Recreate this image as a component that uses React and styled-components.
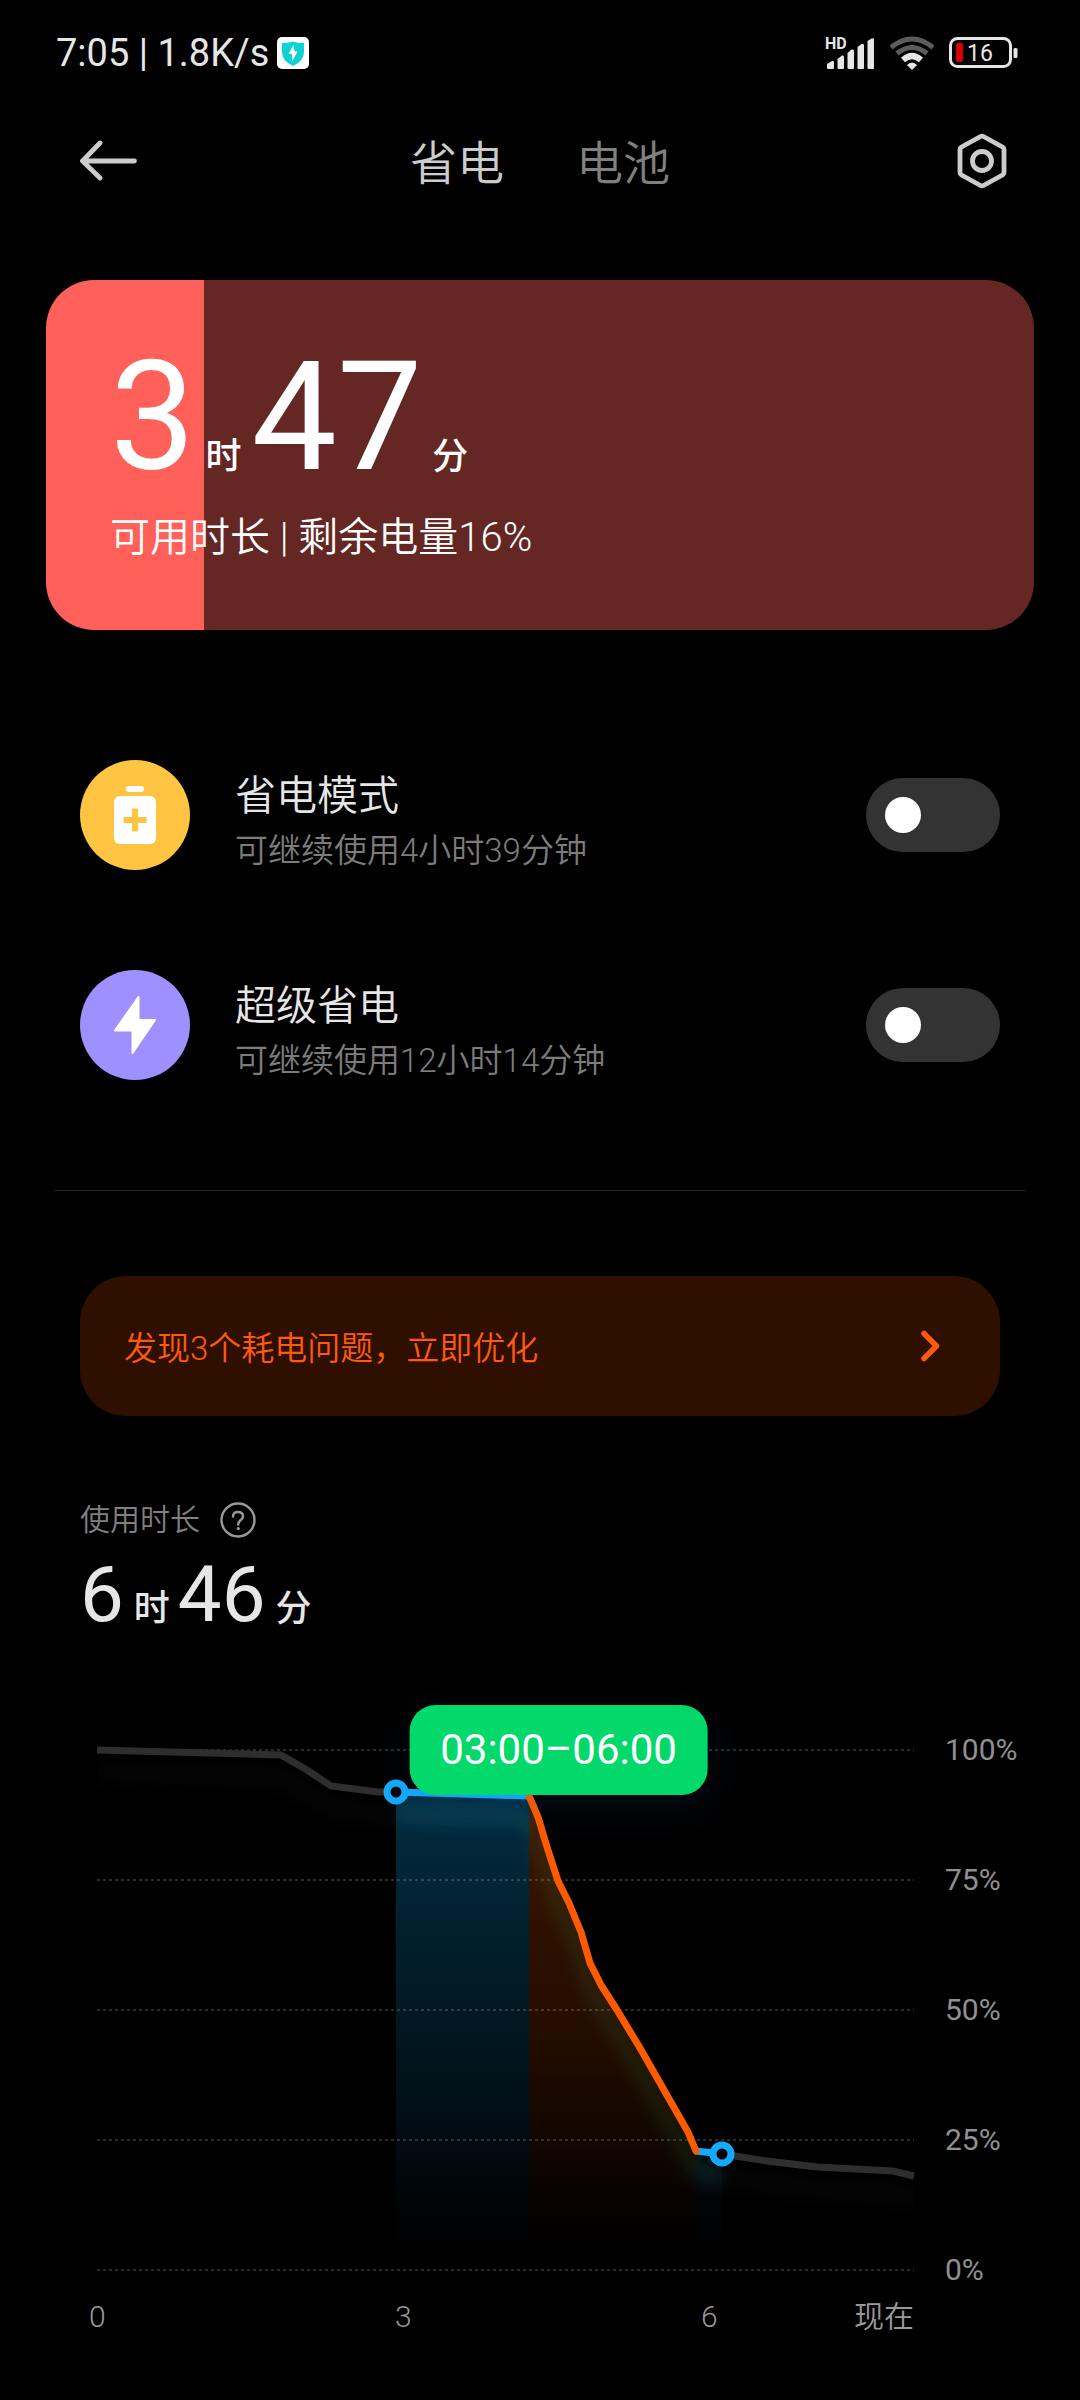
import React, { useState } from "react";
import styled, { createGlobalStyle } from "styled-components";

const GlobalStyle = createGlobalStyle`
    * {
        box-sizing: border-box;
    }

    body {
        margin: 0;
        background: #000;
        color: #e6e6e6;
        font-family: Roboto, "Noto Sans CJK SC", sans-serif;
        font-weight: 350;
    }

    button {
        padding: 0;
        border: none;
        background: none;
        color: inherit;
        font: inherit;
        cursor: pointer;
    }

    svg {
        display: block;
    }
`;

const Page = styled.main`
    min-height: 100vh;
    padding-bottom: 58px;
`;

const StatusBar = styled.div`
    display: flex;
    align-items: center;
    justify-content: space-between;
    height: 106px;
    padding: 0 62px 0 56px;
`;

const StatusGroup = styled.div`
    display: flex;
    align-items: center;
    gap: ${(props) => props.$gap}px;
    font-size: 38px;
    font-weight: 400;
    line-height: 44px;
`;

const TopBar = styled.header`
    display: grid;
    grid-template-columns: 1fr auto 1fr;
    align-items: center;
    height: 110px;
    padding: 0 70px;
`;

const IconButton = styled.button`
    justify-self: ${(props) => props.$side};
`;

const Tabs = styled.nav`
    display: flex;
    gap: 72px;
    padding-top: 6px;
`;

const Tab = styled.button`
    color: ${(props) => (props.$active ? "#cccccc" : "#808080")};
    font-size: 47px;
    line-height: 68px;
`;

const Hero = styled.section`
    margin: 64px 46px 0;
    height: 350px;
    padding: 68px 64px 0;
    border-radius: 48px;
    color: #fff;
    background: linear-gradient(
        to right,
        #ff6059 ${(props) => props.$level}%,
        #652723 ${(props) => props.$level}%
    );
`;

const Duration = styled.div`
    display: flex;
    align-items: baseline;
    font-weight: 400;
    font-size: ${(props) => props.$size}px;
    line-height: ${(props) => props.$line}px;
`;

const Unit = styled.span`
    margin: 0 ${(props) => props.$after || 0}px 0 ${(props) => props.$before}px;
    font-size: 36px;
    font-weight: 500;
    line-height: 52px;
`;

const HeroNote = styled.p`
    margin: 24px 0 0;
    font-size: 40px;
    line-height: 56px;
`;

const ModeList = styled.section`
    display: flex;
    flex-direction: column;
    gap: 100px;
    margin: 130px 80px 0;
`;

const ModeRow = styled.label`
    display: flex;
    align-items: center;
    height: 110px;
    cursor: pointer;
`;

const ModeIcon = styled.span`
    display: grid;
    place-items: center;
    width: 110px;
    height: 110px;
    border-radius: 50%;
    background: ${(props) => props.$color};
`;

const ModeText = styled.span`
    display: flex;
    flex-direction: column;
    flex: 1;
    padding: 12px 0 0 45px;
`;

const ModeTitle = styled.span`
    font-size: 41px;
    line-height: 60px;
`;

const ModeHint = styled.span`
    color: #7c7c7c;
    font-size: 33px;
    line-height: 50px;
`;

const Switch = styled.input`
    appearance: none;
    display: flex;
    align-items: center;
    width: 134px;
    height: 74px;
    margin: 0;
    padding: 0 19px;
    border-radius: 37px;
    background: #333;
    cursor: pointer;

    &::before {
        content: "";
        width: 36px;
        height: 36px;
        border-radius: 50%;
        background: #fff;
    }

    &:checked {
        justify-content: flex-end;
        background: #0d84ff;
    }
`;

const Divider = styled.hr`
    height: 1px;
    margin: 110px 54px 0;
    border: none;
    background: #252525;
`;

const Notice = styled.button`
    && {
        display: flex;
        align-items: center;
        justify-content: space-between;
        width: calc(100% - 160px);
        height: 140px;
        margin: 85px 80px 0;
        padding: 0 58px 0 44px;
        border-radius: 46px;
        background: #2e0f00;
        color: #ff5a0a;
        font-size: 33px;
    }
`;

const Usage = styled.section`
    margin: 80px 80px 0;
`;

const UsageLabel = styled.div`
    display: flex;
    align-items: center;
    gap: 20px;
    color: #808080;
    font-size: 30px;
    line-height: 48px;
`;

const ChartGrid = styled.div`
    display: grid;
    grid-template-columns: 1fr 166px;
    margin: 104px 0 0 97px;
`;

const Plot = styled.div`
    position: relative;

    svg {
        width: 100%;
        overflow: visible;
    }
`;

const Tooltip = styled.div`
    position: absolute;
    left: 56.5%;
    top: 0;
    transform: translate(-50%, -50%);
    padding: 0 31px;
    border-radius: 26px;
    background: #03d96a;
    box-shadow: 0 12px 40px rgba(10, 110, 200, 0.12);
    color: #fff;
    font-size: 42px;
    font-weight: 400;
    line-height: 90px;
    white-space: nowrap;
`;

const YAxis = styled.div`
    display: flex;
    flex-direction: column;
    justify-content: space-between;
    margin: -20px 0 -20px 31px;
    color: #909090;
    font-size: 30px;
    font-weight: 400;
    line-height: 40px;
`;

const XAxis = styled.div`
    display: grid;
    grid-template-columns: 306fr 306fr 205fr;
    margin-top: 25px;
    color: #999;
    font-size: 30px;
    line-height: 44px;
`;

const XTick = styled.span`
    margin-left: -8px;
`;

const LastTick = styled.span`
    display: flex;
    justify-content: space-between;
    margin-left: -8px;
`;

const modes = [
    {
        id: "saver",
        title: "省电模式",
        hint: "可继续使用4小时39分钟",
        color: "#ffc542",
        icon: <SaverIcon />,
    },
    {
        id: "ultra",
        title: "超级省电",
        hint: "可继续使用12小时14分钟",
        color: "#9e91ff",
        icon: <BoltIcon />,
    },
];

const levels = ["100%", "75%", "50%", "25%", "0%"];

function ShieldIcon() {
    return (
        <svg width="32" height="32" viewBox="0 0 32 32">
            <rect width="32" height="32" rx="5" fill="#fff" />
            <path
                d="M16 4.500Q21 6 27 6V15Q27 24 16 29Q5 24 5 15V6Q11 6 16 4.500Z"
                fill="#0ed2d6"
            />
            <path d="M16.500 8 11.500 17H15L15 24.500 20.500 14.500H17.500Z" fill="#fff" />
        </svg>
    );
}

function SignalIcon() {
    return (
        <svg
            width="51"
            height="34"
            viewBox="0 0 51 34"
            fill="#e6e6e6"
            overflow="visible"
        >
            <text x="1" y="13" fontSize="16" fontWeight="700" fontFamily="Roboto">
                HD
            </text>
            <path d="M3 28 8 25Q10 24.500 10 26V32Q10 33 9 33H4Q3 33 3 32Z" />
            <path d="M13.500 23 18 19.500Q20 19 20 21V32Q20 33 19 33H14.500Q13.500 33 13.500 32Z" />
            <path d="M23.500 17 27.500 13.500Q30 13 30 15V32Q30 33 29 33H24.500Q23.500 33 23.500 32Z" />
            <path d="M33.500 11 37.500 8Q40 7.500 40 9V32Q40 33 39 33H34.500Q33.500 33 33.500 32Z" />
            <path d="M43.500 5 47.500 2.500Q50 1.500 50 3.500V32Q50 33 49 33H44.500Q43.500 33 43.500 32Z" />
        </svg>
    );
}

function WifiIcon() {
    return (
        <svg width="46" height="34" viewBox="0 0 46 34" fill="none" strokeWidth="5">
            <path d="M2 11.500Q23 -5.500 44 11.500" stroke="#5c5c5c" />
            <path d="M8 17.500Q23 5.500 38 17.500" stroke="#5c5c5c" />
            <path d="M14 24Q23 16 32 24" stroke="#e6e6e6" strokeWidth="6" />
            <path
                d="M18.500 29Q23 25 27.500 29L23 33.500Z"
                fill="#e6e6e6"
                stroke="#e6e6e6"
                strokeWidth="1"
            />
        </svg>
    );
}

function BatteryIcon() {
    return (
        <svg width="69" height="32" viewBox="0 0 69 32">
            <rect
                x="1.500"
                y="1.500"
                width="60"
                height="28"
                rx="7"
                fill="none"
                stroke="#e6e6e6"
                strokeWidth="3"
            />
            <rect x="64.500" y="11" width="4" height="10" rx="1.500" fill="#e6e6e6" />
            <rect x="7" y="6" width="7" height="19" rx="2" fill="#d60000" />
            <text
                x="31"
                y="24"
                fill="#e6e6e6"
                fontSize="23"
                fontWeight="400"
                textAnchor="middle"
            >
                16
            </text>
        </svg>
    );
}

function BackIcon() {
    return (
        <svg
            width="68"
            height="42"
            viewBox="-10 0 68 42"
            fill="none"
            stroke="#ccc"
            strokeWidth="4.800"
            strokeLinecap="round"
            strokeLinejoin="round"
        >
            <path d="M20 3 2.500 21 20 38M2.500 21H54.500" />
        </svg>
    );
}

function SettingsIcon() {
    return (
        <svg
            width="56"
            height="56"
            viewBox="0 0 56 56"
            fill="none"
            stroke="#ccc"
            strokeWidth="4.800"
            strokeLinejoin="round"
        >
            <path d="M26.500 3.500Q28 2.700 29.500 3.500L48.500 14Q50 15 50 16.500V39.500Q50 41 48.500 42L29.500 52.500Q28 53.300 26.500 52.500L7.500 42Q6 41 6 39.500V16.500Q6 15 7.500 14Z" />
            <circle cx="28" cy="28" r="9.500" />
        </svg>
    );
}

function SaverIcon() {
    return (
        <svg width="42" height="58" viewBox="0 0 42 58" fill="#fff">
            <rect x="12" width="18" height="6" rx="3" />
            <rect y="10" width="42" height="48" rx="6" />
            <path
                d="M18 22.500h6v8.500h8.500v6h-8.500v8.500h-6v-8.500h-8.500v-6h8.500z"
                fill="#ffc542"
            />
        </svg>
    );
}

function BoltIcon() {
    return (
        <svg
            width="42"
            height="58"
            viewBox="0 0 42 58"
            fill="#fff"
            stroke="#fff"
            strokeWidth="2"
            strokeLinejoin="round"
        >
            <path d="M24.500 1V24H41L18.500 57V34.500H1Z" />
        </svg>
    );
}

function ChevronIcon() {
    return (
        <svg
            width="22"
            height="34"
            viewBox="0 0 22 34"
            fill="none"
            stroke="#ff5a0a"
            strokeWidth="5.500"
            strokeLinecap="round"
            strokeLinejoin="round"
        >
            <path d="M4 4.500 16.500 17 4 29.500" />
        </svg>
    );
}

function HelpIcon() {
    return (
        <svg
            width="36"
            height="36"
            viewBox="0 0 36 36"
            fill="none"
            stroke="#999"
            strokeWidth="2.400"
            strokeLinecap="round"
        >
            <circle cx="18" cy="18" r="16.500" />
            <path d="M13 14.500Q13 10 18 10Q23 10 23 14.300Q23 16.500 20.500 18.300Q18.300 20 18.300 22.500" />
            <circle cx="18.300" cy="26.500" r="1.600" fill="#999" stroke="none" />
        </svg>
    );
}

function Marker({ x, y }) {
    return (
        <circle cx={x} cy={y} r="9" fill="#000" stroke="#12abff" strokeWidth="7" />
    );
}

function BatteryChart() {
    const first = "0,0 184,5 210,20 234,36 281,42 299,42";
    const drop =
        "432,46 441,67 450,97 461,131 472,153 484,182 493,213 504,235 520,260 543,298 591,382 599,401";
    const last = "625,404 638,406 670,411 720,417 796,421 817,426";

    return (
        <svg viewBox="0 0 817 520" fill="none" strokeWidth="7">
            <defs>
                <linearGradient id="idle" gradientUnits="userSpaceOnUse" x1="0" y1="42" x2="0" y2="520">
                    <stop offset="0" stopColor="#0aa4ee" stopOpacity="0.270" />
                    <stop offset="0.600" stopColor="#0aa4ee" stopOpacity="0.110" />
                    <stop offset="0.950" stopColor="#0aa4ee" stopOpacity="0" />
                </linearGradient>
                <linearGradient id="busy" gradientUnits="userSpaceOnUse" x1="0" y1="46" x2="0" y2="520">
                    <stop offset="0" stopColor="#ff5a00" stopOpacity="0.240" />
                    <stop offset="0.500" stopColor="#ff5a00" stopOpacity="0.140" />
                    <stop offset="0.950" stopColor="#ff5a00" stopOpacity="0" />
                </linearGradient>
                <filter id="glow" filterUnits="userSpaceOnUse" x="-20" y="-20" width="860" height="560">
                    <feGaussianBlur stdDeviation="7" />
                </filter>
                <clipPath id="under">
                    <polygon points={`${first} ${drop} ${last} 817,520 0,520`} />
                </clipPath>
            </defs>

            <polygon points="299,42 432,46 432,520 299,520" fill="url(#idle)" />
            <polygon points={`${drop} 599,520 432,520`} fill="url(#busy)" />
            <polygon points="599,401 625,404 625,520 599,520" fill="url(#idle)" />

            {levels.map((level, i) => (
                <line
                    key={level}
                    x2="817"
                    y1={i * 130}
                    y2={i * 130}
                    stroke="#fff"
                    strokeOpacity="0.170"
                    strokeWidth="2"
                    strokeDasharray="3 3"
                />
            ))}

            <g clipPath="url(#under)">
                <g filter="url(#glow)" transform="translate(0 22)" strokeWidth="20">
                    <polyline points={first} stroke="#fff" strokeOpacity="0.016" />
                    <polyline points="299,42 432,46" stroke="#30a0b0" strokeOpacity="0.120" />
                    <polyline points={drop} stroke="#40a050" strokeOpacity="0.110" />
                    <polyline points="599,401 625,404" stroke="#30a0b0" strokeOpacity="0.120" />
                    <polyline points={last} stroke="#fff" strokeOpacity="0.016" />
                </g>
            </g>

            <polyline points={first} stroke="#2e2e30" />
            <polyline points={last} stroke="#2e2e30" />
            <polyline points="299,42 432,46" stroke="#12abff" />
            <polyline points="599,401 625,404" stroke="#12abff" />
            <polyline
                points={drop}
                stroke="#ff5a00"
                strokeLinecap="round"
                strokeLinejoin="round"
            />
            <Marker x={299} y={42} />
            <Marker x={625} y={404} />
        </svg>
    );
}

function App() {
    const [enabled, setEnabled] = useState({});

    return (
        <Page>
            <GlobalStyle />

            <StatusBar>
                <StatusGroup $gap={8}>
                    <span>7:05 | 1.8K/s</span>
                    <ShieldIcon />
                </StatusGroup>
                <StatusGroup $gap={14}>
                    <SignalIcon />
                    <WifiIcon />
                    <BatteryIcon />
                </StatusGroup>
            </StatusBar>

            <TopBar>
                <IconButton $side="start" aria-label="返回">
                    <BackIcon />
                </IconButton>
                <Tabs>
                    <Tab $active>省电</Tab>
                    <Tab>电池</Tab>
                </Tabs>
                <IconButton $side="end" aria-label="设置">
                    <SettingsIcon />
                </IconButton>
            </TopBar>

            <Hero $level={16}>
                <Duration $size={152} $line={138}>
                    3<Unit $before={10} $after={10}>时</Unit>
                    47<Unit $before={10}>分</Unit>
                </Duration>
                <HeroNote>可用时长 | 剩余电量16%</HeroNote>
            </Hero>

            <ModeList>
                {modes.map((mode) => (
                    <ModeRow key={mode.id}>
                        <ModeIcon $color={mode.color}>{mode.icon}</ModeIcon>
                        <ModeText>
                            <ModeTitle>{mode.title}</ModeTitle>
                            <ModeHint>{mode.hint}</ModeHint>
                        </ModeText>
                        <Switch
                            type="checkbox"
                            role="switch"
                            checked={!!enabled[mode.id]}
                            onChange={(e) =>
                                setEnabled({ ...enabled, [mode.id]: e.target.checked })
                            }
                        />
                    </ModeRow>
                ))}
            </ModeList>

            <Divider />

            <Notice>
                <span>发现3个耗电问题，立即优化</span>
                <ChevronIcon />
            </Notice>

            <Usage>
                <UsageLabel>
                    使用时长
                    <IconButton aria-label="说明">
                        <HelpIcon />
                    </IconButton>
                </UsageLabel>
                <Duration $size={78} $line={102}>
                    6<Unit $before={10} $after={8}>时</Unit>
                    46<Unit $before={10}>分</Unit>
                </Duration>
            </Usage>

            <ChartGrid>
                <Plot>
                    <BatteryChart />
                    <Tooltip>03:00–06:00</Tooltip>
                </Plot>
                <YAxis>
                    {levels.map((level) => (
                        <span key={level}>{level}</span>
                    ))}
                </YAxis>
                <XAxis>
                    <XTick>0</XTick>
                    <XTick>3</XTick>
                    <LastTick>
                        <span>6</span>
                        <span>现在</span>
                    </LastTick>
                </XAxis>
            </ChartGrid>
        </Page>
    );
}

export default App;
